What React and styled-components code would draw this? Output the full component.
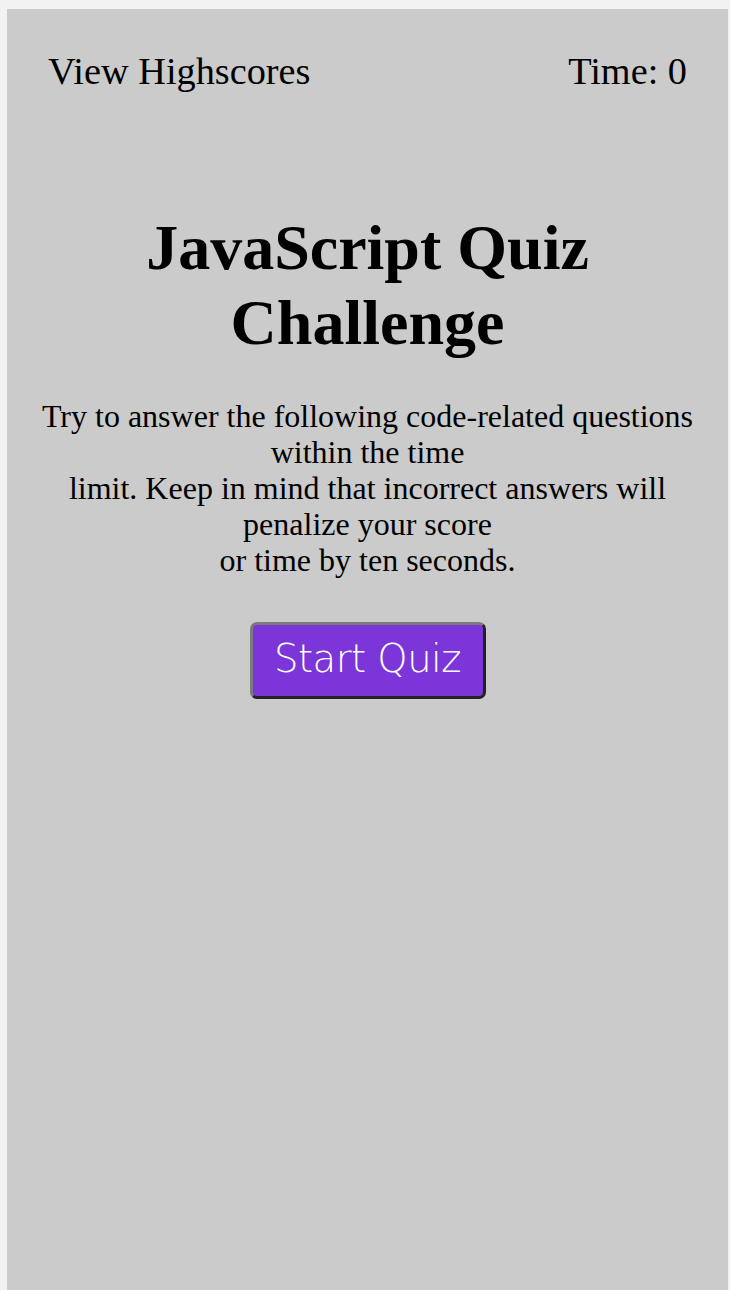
import React from "react";
import styled, { createGlobalStyle } from "styled-components";

const GlobalStyle = createGlobalStyle`
  html {
    background: #f2f2f2;
  }
  body {
    margin: 9px 2px 0 7px;
    font-family: "Liberation Serif", "Times New Roman", serif;
    color: #000;
  }
`;

const Page = styled.div`
  background: #cbcbcb;
  min-height: calc(100vh - 9px);
  display: flex;
  flex-direction: column;
`;

const Header = styled.header`
  display: flex;
  justify-content: space-between;
  align-items: center;
  padding: 41px 41px 0 41px;
  font-size: 38.3px;
  line-height: 43px;
`;

const HeaderItem = styled.span`
  white-space: nowrap;
`;

const Main = styled.main`
  display: flex;
  flex-direction: column;
  align-items: center;
  text-align: center;
  padding: 0 20px;
`;

const Title = styled.h1`
  margin: 117px 0 0;
  font-size: 64px;
  line-height: 75px;
  font-weight: bold;
`;

const Intro = styled.p`
  margin: 38px 0 0;
  font-size: 32px;
  line-height: 36px;
`;

const StartButton = styled.button`
  margin-top: 44px;
  width: 236px;
  height: 77px;
  background: #7c35d8;
  color: #fff;
  border: 3px solid;
  border-color: #7a7a7a #222 #222 #7a7a7a;
  border-radius: 7px;
  font-family: "DejaVu Sans", "Liberation Sans", sans-serif;
  font-weight: 300;
  font-size: 38.5px;
  letter-spacing: -0.5px;
  cursor: pointer;
  padding: 0 0 5px;
`;

export default function App() {
  return (
    <>
      <GlobalStyle />
      <Page>
        <Header>
          <HeaderItem>View Highscores</HeaderItem>
          <HeaderItem>Time: 0</HeaderItem>
        </Header>
        <Main>
          <Title>JavaScript Quiz Challenge</Title>
          <Intro>
            Try to answer the following code-related questions within the time
            <br />
            limit. Keep in mind that incorrect answers will penalize your score
            <br />
            or time by ten seconds.
          </Intro>
          <StartButton>Start Quiz</StartButton>
        </Main>
      </Page>
    </>
  );
}
